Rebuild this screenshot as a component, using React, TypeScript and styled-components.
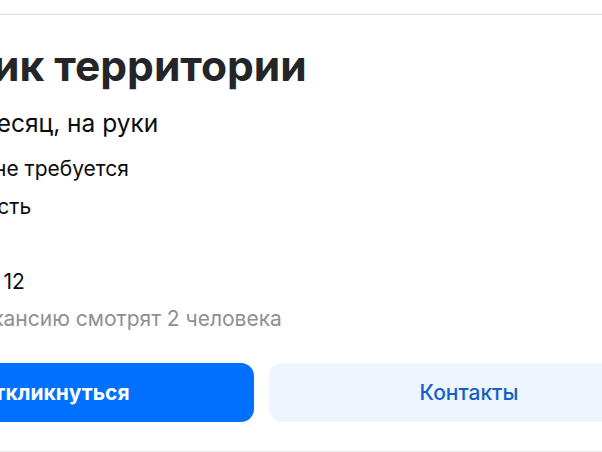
import styled, { createGlobalStyle } from 'styled-components'

const GlobalStyle = createGlobalStyle`
  html, body {
    margin: 0;
    padding: 0;
    background: #fff;
  }
  body {
    font-family: Inter, 'Noto Sans', Arial, sans-serif;
    -webkit-font-smoothing: antialiased;
  }
`

const Page = styled.div`
  width: 602px;
  height: 452px;
  overflow: hidden;
  background: #fff;
  display: flex;
  flex-direction: column;
`

const TopRule = styled.div`
  height: 14px;
  flex-shrink: 0;
  border-bottom: 1px solid #e3e4e6;
  box-shadow: 0 -4px 0 -3px #f4f4f5 inset;
`

// the vacancy card is wider than the viewport; its left part is out of frame
const Card = styled.div`
  flex: 1;
  margin-left: -153px;
  width: 840px;
  padding-top: 26px;
  display: flex;
  flex-direction: column;
  border-bottom: 1px solid #ececee;
`

const Title = styled.h1`
  margin: 0;
  font-size: 42.5px;
  line-height: 50px;
  font-weight: 700;
  color: #232529;
  white-space: nowrap;
`

const Salary = styled.div`
  margin-top: 16px;
  font-size: 24.5px;
  line-height: 32px;
  color: #0c0c0e;
  white-space: nowrap;
`

const InfoList = styled.div`
  margin-top: 11px;
  display: flex;
  flex-direction: column;
`

const InfoLine = styled.p<{ $muted?: boolean }>`
  margin: 0;
  font-size: 21px;
  line-height: 37.5px;
  color: ${(p) => (p.$muted ? '#8c9095' : '#0c0c0e')};
  white-space: nowrap;
`

const Actions = styled.div`
  margin-top: 25px;
  padding-left: 7px;
  display: flex;
  gap: 15px;
`

const Button = styled.button<{ $primary?: boolean }>`
  flex: 0 0 400px;
  height: 59px;
  border: none;
  border-radius: 13px;
  font-family: inherit;
  font-size: 21px;
  font-weight: ${(p) => (p.$primary ? 700 : 500)};
  background: ${(p) => (p.$primary ? '#0070ff' : '#eef5fe')};
  color: ${(p) => (p.$primary ? '#fff' : '#1461c6')};
  cursor: pointer;
`

export default function App() {
  return (
    <>
      <GlobalStyle />
      <Page>
        <TopRule />
        <Card>
          <Title>Уборщик территории</Title>
          <Salary>45{'\u202F'}000{'\u202F'}₽ в месяц, на руки</Salary>
          <InfoList>
            <InfoLine>Опыт работы: не требуется</InfoLine>
            <InfoLine>Полная занятость</InfoLine>
            <InfoLine>График: 2/2</InfoLine>
            <InfoLine>Рабочие часы: 12</InfoLine>
            <InfoLine $muted>Сейчас эту вакансию смотрят 2 человека</InfoLine>
          </InfoList>
          <Actions>
            <Button $primary>Откликнуться</Button>
            <Button>Контакты</Button>
          </Actions>
        </Card>
      </Page>
    </>
  )
}
